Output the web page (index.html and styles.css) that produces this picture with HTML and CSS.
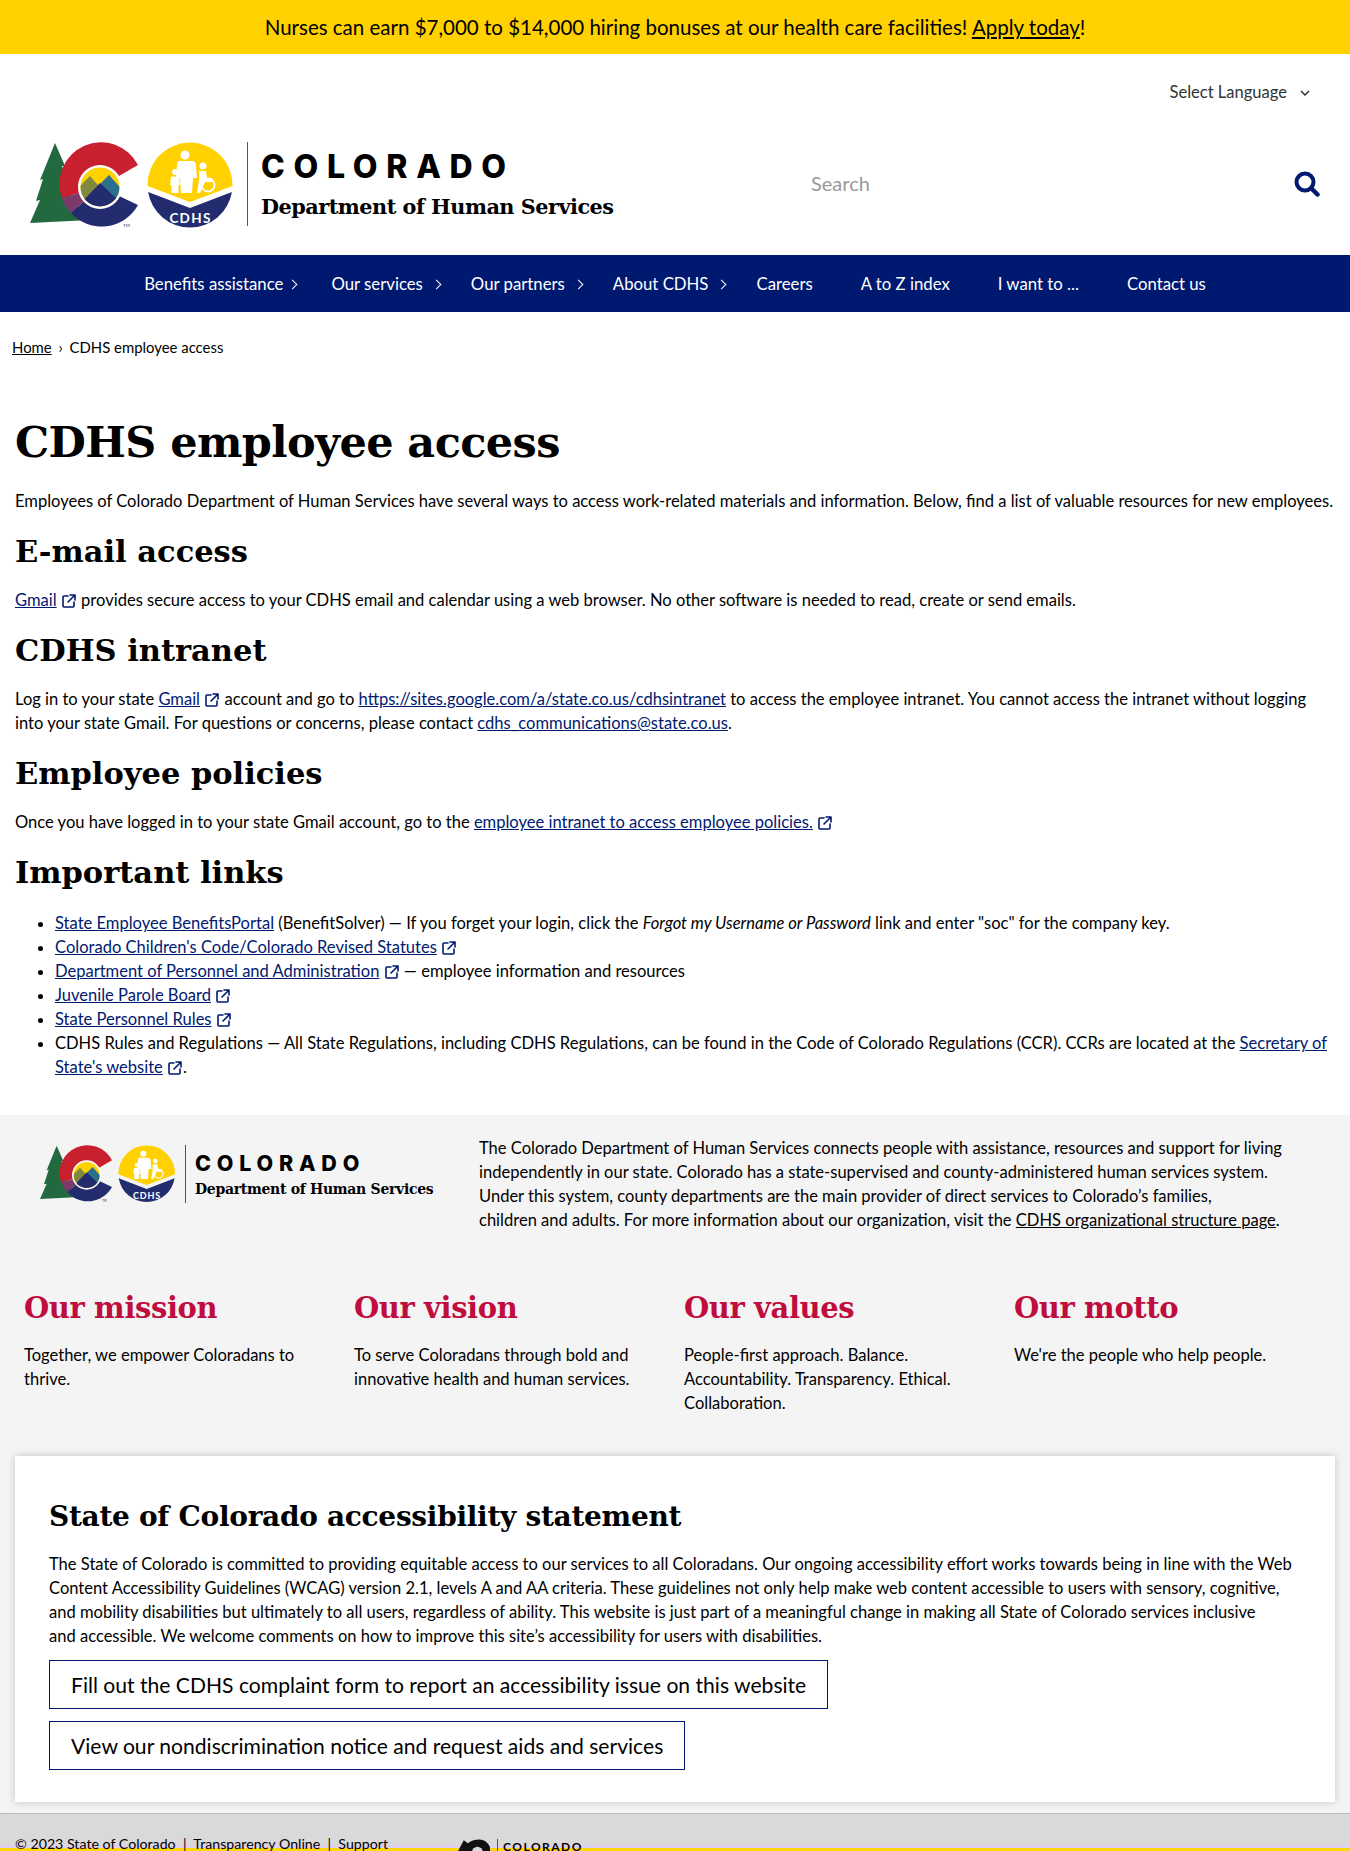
FILE: index.html
```html
<!DOCTYPE html>
<html lang="en">
<head>
<meta charset="utf-8">
<title>CDHS employee access</title>
<link rel="stylesheet" href="styles.css">
</head>
<body>
<svg class="defs" width="0" height="0" aria-hidden="true">
  <defs>
    <clipPath id="peaks"><circle cx="70" cy="45" r="19.500"/></clipPath>
  </defs>
  <symbol id="mark" viewBox="0 0 210 90">
    <path fill="#23693f" d="M25 1 L35 24 L32 24 L40 45 L37 45 L46 64 L60 78 L0 81 L10 58 L6 59 L13 37 L10 38 Z"/>
    <path fill="#c8202f" d="M108 23 A41.500 41.500 0 0 0 32 56 L70 45 Z"/>
    <path fill="#7c3a6b" d="M32 56 A41.500 41.500 0 0 0 41 71 L70 45 Z"/>
    <path fill="#232c6f" d="M41 71 A41.500 41.500 0 0 0 108 63 L70 45 Z"/>
    <circle cx="70" cy="45" r="22" fill="#fff"/>
    <g clip-path="url(#peaks)">
      <rect x="48" y="24" width="44" height="44" fill="#ffd100"/>
      <path fill="#7f8a3f" d="M46 48 L60 34 L74 50 L58 64 Z"/>
      <path fill="#2d6f8e" d="M68 44 L79 33 L96 52 L88 60 Z"/>
      <path fill="#232c6f" d="M50 62 L70 41 L92 62 L92 70 L50 70 Z"/>
    </g>
    <text x="93" y="85" class="mark-tm">TM</text>
    <path fill="#ffd100" d="M117.510 44 A42.500 42.500 0 1 1 202.490 44 L160 60 Z"/>
    <path fill="#232c6f" d="M118.080 50 L160 66 L201.920 50 A42.500 42.500 0 0 1 118.080 50 Z"/>
    <g fill="#fff">
      <circle cx="155" cy="13" r="4.500"/>
      <path d="M149 19 H162 C165 19 166 21 166 24 L167 36 L163 36 L162 51 H151 L150 36 L146 36 L147 23 C147 21 148 19 149 19 Z"/>
      <circle cx="145" cy="30" r="3"/>
      <path d="M141 34.500 H149 L150 43 H148.500 V51 H141.500 V43 H140 Z"/>
      <circle cx="173" cy="24" r="3.500"/>
      <path d="M169 29 H176 L177 36 L183 37 V40 L175 40 L170 51 H167 L169 38 Z"/>
    </g>
    <circle cx="178" cy="43" r="6.500" fill="none" stroke="#fff" stroke-width="1.800"/>
    <text x="160.500" y="81" class="mark-text" text-anchor="middle">CDHS</text>
  </symbol>
  <symbol id="ext" viewBox="0 0 16 16">
    <path fill="none" stroke="currentColor" stroke-width="1.600" stroke-linecap="round" stroke-linejoin="round" d="M7 3 H3 Q2 3 2 4 V13 Q2 14 3 14 H12 Q13 14 13 13 V9 M9 2 H14 V7 M14 2 L7 9"/>
  </symbol>
</svg>

<div class="alert">Nurses can earn $7,000 to $14,000 hiring bonuses at our health care facilities! <a href="#">Apply today</a>!</div>

<header class="site-header">
  <div class="lang">
    <span>Select Language</span>
    <svg class="lang-chevron" viewBox="0 0 10 6"><path fill="none" stroke="currentColor" stroke-width="1.500" d="M1 1 L5 5 L9 1"/></svg>
  </div>
  <div class="brand-row">
    <div class="logo">
      <svg class="logo-mark"><use href="#mark"/></svg>
      <div class="logo-text">
        <div class="logo-state">COLORADO</div>
        <div class="logo-dept">Department of Human Services</div>
      </div>
    </div>
    <div class="search">
      <span class="search-text">Search</span>
      <svg class="search-icon" viewBox="0 0 26 26"><circle cx="11" cy="11" r="8.500" fill="none" stroke="currentColor" stroke-width="4"/><path stroke="currentColor" stroke-width="4.500" stroke-linecap="round" d="M17.500 17.500 L23.500 23.500"/></svg>
    </div>
  </div>
</header>

<nav class="main-nav">
  <a href="#" class="has-sub">Benefits assistance</a>
  <a href="#" class="has-sub">Our services</a>
  <a href="#" class="has-sub">Our partners</a>
  <a href="#" class="has-sub">About CDHS</a>
  <a href="#">Careers</a>
  <a href="#">A to Z index</a>
  <a href="#">I want to ...</a>
  <a href="#">Contact us</a>
</nav>

<div class="crumbs"><a href="#">Home</a> <span class="sep">›</span> CDHS employee access</div>

<main class="content">
  <h1>CDHS employee access</h1>
  <p>Employees of Colorado Department of Human Services have several ways to access work-related materials and information. Below, find a list of valuable resources for new employees.</p>
  <h2>E-mail access</h2>
  <p><a href="#">Gmail</a> <svg class="ext"><use href="#ext"/></svg> provides secure access to your CDHS email and calendar using a web browser. No other software is needed to read, create or send emails.</p>
  <h2>CDHS intranet</h2>
  <p>Log in to your state <a href="#">Gmail</a> <svg class="ext"><use href="#ext"/></svg> account and go to <a href="#">https://sites.google.com/a/state.co.us/cdhsintranet</a> to access the employee intranet. You cannot access the intranet without logging into your state Gmail. For questions or concerns, please contact <a href="#">cdhs_communications@state.co.us</a>.</p>
  <h2>Employee policies</h2>
  <p>Once you have logged in to your state Gmail account, go to the <a href="#">employee intranet to access employee policies.</a> <svg class="ext"><use href="#ext"/></svg></p>
  <h2>Important links</h2>
  <ul>
    <li><a href="#">State Employee BenefitsPortal</a> (BenefitSolver) — If you forget your login, click the <em>Forgot my Username or Password</em> link and enter "soc" for the company key.</li>
    <li><a href="#">Colorado Children's Code/Colorado Revised Statutes</a> <svg class="ext"><use href="#ext"/></svg></li>
    <li><a href="#">Department of Personnel and Administration</a> <svg class="ext"><use href="#ext"/></svg> — employee information and resources</li>
    <li><a href="#">Juvenile Parole Board</a> <svg class="ext"><use href="#ext"/></svg></li>
    <li><a href="#">State Personnel Rules</a> <svg class="ext"><use href="#ext"/></svg></li>
    <li>CDHS Rules and Regulations — All State Regulations, including CDHS Regulations, can be found in the Code of Colorado Regulations (CCR). CCRs are located at the <a href="#">Secretary of State's website</a> <svg class="ext"><use href="#ext"/></svg>.</li>
  </ul>
</main>

<section class="about">
  <div class="about-top">
    <div class="logo logo-small">
      <svg class="logo-mark"><use href="#mark"/></svg>
      <div class="logo-text">
        <div class="logo-state">COLORADO</div>
        <div class="logo-dept">Department of Human Services</div>
      </div>
    </div>
    <p>The Colorado Department of Human Services connects people with assistance, resources and support for living independently in our state. Colorado has a state-supervised and county-administered human services system. Under this system, county departments are the main provider of direct services to Colorado’s families,<br>children and adults. For more information about our organization, visit the <a href="#">CDHS organizational structure page</a>.</p>
  </div>
  <div class="values">
    <div><h3>Our mission</h3><p>Together, we empower Coloradans to thrive.</p></div>
    <div><h3>Our vision</h3><p>To serve Coloradans through bold and innovative health and human services.</p></div>
    <div><h3>Our values</h3><p>People-first approach. Balance. Accountability. Transparency. Ethical. Collaboration.</p></div>
    <div><h3>Our motto</h3><p>We're the people who help people.</p></div>
  </div>
  <div class="a11y">
    <h2>State of Colorado accessibility statement</h2>
    <p>The State of Colorado is committed to providing equitable access to our services to all Coloradans. Our ongoing accessibility effort works towards being in line with the Web Content Accessibility Guidelines (WCAG) version 2.1, levels A and AA criteria. These guidelines not only help make web content accessible to users with sensory, cognitive, and mobility disabilities but ultimately to all users, regardless of ability. This website is just part of a meaningful change in making all State of Colorado services inclusive<br>and accessible. We welcome comments on how to improve this site’s accessibility for users with disabilities.</p>
    <a class="btn" href="#">Fill out the CDHS complaint form to report an accessibility issue on this website</a>
    <a class="btn" href="#">View our nondiscrimination notice and request aids and services</a>
  </div>
</section>

<footer class="bottom">
  <div class="bottom-links">© 2023 State of Colorado &nbsp;|&nbsp; Transparency Online &nbsp;|&nbsp; Support</div>
  <div class="bottom-logo">
    <svg class="bottom-mark" viewBox="0 0 34 26"><path fill="#111" d="M0 12 L6 1 L10 4 C14 1 18 0 22 0 C27 0 31 3 33 8 L33 26 L0 26 Z"/><circle cx="20" cy="13" r="5.500" fill="#d9d9d9"/></svg>
    <span class="bottom-word">COLORADO</span>
  </div>
</footer>
</body>
</html>
```
FILE: styles.css
```css
* { box-sizing: border-box; }
html, body { margin: 0; padding: 0; }
body {
  height: 1851px;
  overflow: hidden;
  background: #fff;
  color: #000;
  font-family: "Lato", "Liberation Sans", sans-serif;
  font-size: 16.550px;
  line-height: 24px;
}
.defs { position: absolute; }
a { color: #001970; }
p { margin: 0; }
.alert {
  height: 54px;
  background: #ffd100;
  text-align: center;
  font-size: 20.500px;
  line-height: 54px;
}
.alert a { color: #000; }
.site-header { height: 201px; padding: 0 30px; }
.lang {
  height: 88px;
  padding: 26px 10px 0 0;
  display: flex;
  justify-content: flex-end;
  align-items: flex-start;
  gap: 13px;
  color: #333;
}
.lang-chevron { width: 10px; height: 6px; margin-top: 10px; }
.brand-row { display: flex; justify-content: space-between; }
.logo { display: flex; align-items: flex-start; }
.logo-mark { width: 210px; height: 90px; flex: none; }
.logo-text {
  border-left: 1px solid #555;
  margin-left: 7px;
  padding-left: 13px;
  height: 84px;
}
.mark-text { font: 700 13.500px "Lato", sans-serif; fill: #fff; letter-spacing: 1.300px; }
.mark-tm { font: 400 4.500px "Lato", sans-serif; fill: #333; }
.logo-state {
  font-family: "Inter", "Lato", sans-serif;
  font-weight: 800;
  font-size: 32px;
  line-height: 40px;
  letter-spacing: 8.700px;
  margin-top: 5px;
}
.logo-dept {
  font-family: "DejaVu Serif", serif;
  font-weight: 700;
  font-size: 20.800px;
  line-height: 30px;
  letter-spacing: -0.500px;
  margin-top: 5px;
  white-space: nowrap;
}
.search {
  width: 509px;
  display: flex;
  justify-content: space-between;
  align-items: flex-start;
  padding-top: 26px;
}
.search-text { color: #999; font-size: 20px; line-height: 30px; }
.search-icon { width: 26px; height: 26px; color: #001970; margin-top: 3px; }
.main-nav {
  height: 57px;
  background: #001970;
  display: flex;
  justify-content: center;
  align-items: center;
}
.main-nav a {
  position: relative;
  padding: 0 24px;
  color: #fff;
  font-size: 16.750px;
  text-decoration: none;
}
.has-sub::after {
  content: "";
  position: absolute;
  right: 7px;
  top: 9px;
  width: 6px;
  height: 6px;
  border-top: 1.800px solid #fff;
  border-right: 1.800px solid #fff;
  transform: rotate(45deg);
}
.has-sub:first-child::after { right: 11px; }
.crumbs { padding: 23px 12px 0; font-size: 14.900px; }
.crumbs a { color: #000; }
.sep { margin: 0 3px; }
.content { padding: 0 15px; }
h1, h2, h3 { font-family: "DejaVu Serif", serif; font-weight: 700; margin: 0; }
h1 { font-size: 43px; line-height: 56px; margin: 55px 0 19px; letter-spacing: -0.600px; }
h2 { font-size: 30.500px; line-height: 40px; margin: 18px 0 17px; }
.ext { width: 16px; height: 16px; color: #001970; vertical-align: -3px; }
ul { margin: 19px 0 0; padding-left: 40px; }
.about {
  margin-top: 36px;
  background: #f4f4f4;
  height: 698px;
  padding-top: 21px;
}
.about-top { display: flex; padding: 0 40px 0 40px; }
.about-top a { color: #000; }
.logo-small { flex: none; width: 439px; }
.logo-small .logo-mark { width: 140px; height: 60px; margin-top: 9px; }
.logo-small .logo-text { height: 58px; margin: 9px 0 0 5px; padding-left: 9px; }
.logo-small .logo-state { font-size: 21.500px; line-height: 26px; letter-spacing: 5.800px; margin-top: 5px; }
.logo-small .logo-dept { font-size: 14px; line-height: 20px; letter-spacing: -0.300px; margin-top: 3px; }
.values {
  display: grid;
  grid-template-columns: repeat(4, 330px);
  padding: 56px 0 0 24px;
  height: 224px;
}
.values h3 { color: #bf0d3e; font-size: 29px; line-height: 40px; letter-spacing: -0.400px; margin-bottom: 15px; }
.values p { padding-right: 30px; }
.a11y {
  margin: 0 15px;
  padding: 41px 34px 0;
  height: 346px;
  background: #fff;
  box-shadow: 0 0 8px rgba(0, 0, 0, 0.2);
}
.a11y h2 { margin: 0 0 15px; font-size: 28px; line-height: 40px; letter-spacing: -0.300px; }
.btn {
  display: table;
  margin-top: 12px;
  padding: 0 21px;
  height: 49px;
  line-height: 47px;
  border: 1px solid #001970;
  color: #000;
  font-size: 21.100px;
  text-decoration: none;
}
.bottom {
  height: 38px;
  overflow: hidden;
  background: linear-gradient(#d9d9d9 31px, #dccff0 31px 34px, #ffd800 34px) no-repeat;
  border-top: 1px solid #bbb;
  display: flex;
  padding: 18px 15px 0;
  font-size: 14.200px;
}
.bottom-links { width: 443px; }
.bottom-logo { display: flex; gap: 6px; margin-top: 7px; }
.bottom-word {
  font-weight: 700;
  letter-spacing: 1.500px;
  font-size: 12px;
  line-height: 16px;
  padding-left: 5px;
  border-left: 1px solid #555;
  height: 30px;
}
.bottom-mark { width: 33px; height: 26px; flex: none; }
```
